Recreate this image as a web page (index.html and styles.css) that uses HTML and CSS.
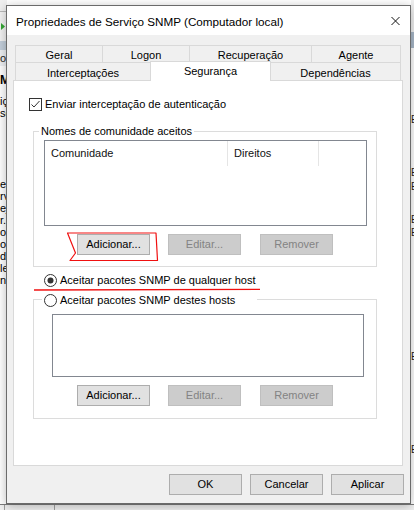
FILE: index.html
```html
<!DOCTYPE html>
<html lang="pt-BR">
<head>
<meta charset="utf-8">
<title>Propriedades de Serviço SNMP (Computador local)</title>
<link rel="stylesheet" href="styles.css">
</head>
<body>
<div class="backdrop">
  <div class="bg-cols">
    <div class="bg-left">
      <div class="bgl-menu"></div>
      <div class="bgl-toolbar"><svg class="bg-play" width="4" height="7" viewBox="0 0 4 7"><path d="M0 0 L4 3.5 L0 7 Z" fill="#35a835"/></svg></div>
      <div class="bgl-band"></div>
      <div class="bgl-colhead">o</div>
      <div class="bgl-content">
        <div class="bgl-title">M</div>
        <div class="bgl-line l-first">iç</div>
        <div class="bgl-line">se</div>
        <div class="bgl-line l-gap">e s</div>
        <div class="bgl-line">rv</div>
        <div class="bgl-line">ej</div>
        <div class="bgl-line">r.</div>
        <div class="bgl-line">o</div>
        <div class="bgl-line">ol</div>
        <div class="bgl-line">de</div>
        <div class="bgl-line">le</div>
        <div class="bgl-line">ni</div>
      </div>
    </div>
    <div class="bg-right">
      <div class="bgr-top"></div>
      <div class="bgr-band"></div>
      <div class="bgr-line r1">E</div>
      <div class="bgr-line r2">E</div>
      <div class="bgr-line r3">E</div>
      <div class="bgr-line r4">E</div>
      <div class="bgr-line r5">E</div>
      <div class="bgr-line r6">E</div>
      <div class="bgr-line r7">E</div>
    </div>
  </div>
  <div class="bg-status"><span class="bg-cell"></span></div>
</div>

<div class="dialog">
  <div class="titlebar">
    <span class="title">Propriedades de Serviço SNMP (Computador local)</span>
    <svg class="close" width="11" height="10" viewBox="0 0 11 10"><path d="M1.5 1 L9.5 9 M9.5 1 L1.5 9" stroke="#111" stroke-width="1" fill="none"/></svg>
  </div>
  <div class="dlg-body">
    <div class="tabs">
      <div class="tab-row back">
        <div class="tab w-geral">Geral</div>
        <div class="tab w-logon">Logon</div>
        <div class="tab w-recup">Recuperação</div>
        <div class="tab w-agente last">Agente</div>
      </div>
      <div class="tab-row front">
        <div class="tab w-interc">Interceptações</div>
        <div class="tab w-seg selected">Segurança</div>
        <div class="tab w-dep last">Dependências</div>
      </div>
    </div>
    <div class="panel">
      <div class="check-row">
        <svg class="checkbox" width="13" height="13" viewBox="0 0 13 13"><rect x="0.5" y="0.5" width="12" height="12" fill="#fff" stroke="#333"/><path d="M2.5 6.5 L5 9 L10.5 3" stroke="#333" stroke-width="1" fill="none"/></svg>
        <span class="label">Enviar interceptação de autenticação</span>
      </div>
      <div class="group g1">
        <div class="legend">Nomes de comunidade aceitos</div>
        <div class="listview">
          <div class="lv-header">
            <div class="col c1">Comunidade</div>
            <div class="col c2">Direitos</div>
          </div>
        </div>
        <div class="btn-row">
          <button class="btn">Adicionar...</button>
          <button class="btn" disabled>Editar...</button>
          <button class="btn" disabled>Remover</button>
        </div>
      </div>
      <div class="radio-row">
        <svg class="radio" width="13" height="13" viewBox="0 0 13 13"><circle cx="6.5" cy="6.5" r="6" fill="#fff" stroke="#333"/><circle cx="6.5" cy="6.5" r="3" fill="#333"/></svg>
        <span class="label">Aceitar pacotes SNMP de qualquer host</span>
      </div>
      <div class="group g2">
        <div class="legend radio-legend">
          <svg class="radio" width="13" height="13" viewBox="0 0 13 13"><circle cx="6.5" cy="6.5" r="6" fill="#fff" stroke="#333"/></svg>
          <span class="label">Aceitar pacotes SNMP destes hosts</span>
        </div>
        <div class="listbox"></div>
        <div class="btn-row">
          <button class="btn">Adicionar...</button>
          <button class="btn" disabled>Editar...</button>
          <button class="btn" disabled>Remover</button>
        </div>
      </div>
    </div>
    <div class="dlg-buttons">
      <button class="btn">OK</button>
      <button class="btn">Cancelar</button>
      <button class="btn">Aplicar</button>
    </div>
  </div>
</div>

<svg class="annot" width="414" height="510" viewBox="0 0 414 510">
  <path d="M67.5 233 L156 233 L157.5 260.5 L70 260.5 L75.5 253 L67.5 233 Z" fill="none" stroke="#f01010" stroke-width="1.2" stroke-linejoin="round"/>
  <path d="M34 290 L260 289.3" fill="none" stroke="#f01010" stroke-width="1.3"/>
</svg>
</body>
</html>
```

FILE: styles.css
```css
* { box-sizing: border-box; }

html, body {
  margin: 0;
  padding: 0;
}

body {
  width: 414px;
  height: 510px;
  overflow: hidden;
  position: relative;
  background: #ffffff;
  color: #000;
  font-family: "Liberation Sans", Arial, sans-serif;
  font-size: 11px;
  line-height: 13px;
}

/* ---------- background application ---------- */
.backdrop {
  height: 510px;
  display: flex;
  flex-direction: column;
}

.bg-cols {
  height: 504px;
  display: flex;
  justify-content: space-between;
}

.bg-left {
  width: 7px;
  overflow: hidden;
  white-space: nowrap;
  display: flex;
  flex-direction: column;
}

.bgl-menu {
  height: 12px;
  background: #f0f0f0;
  border-bottom: 1px solid #b9b9b9;
}

.bgl-toolbar {
  height: 29px;
  background: #f3f3f3;
  padding-top: 11px;
  padding-left: 1px;
}

.bg-play { display: block; }

.bgl-band {
  height: 9px;
  background: #c3cfdb;
}

.bgl-colhead {
  height: 16px;
  line-height: 16px;
  background: #eef0f3;
  color: #222;
  font-size: 11px;
}

.bgl-content {
  flex: 1;
  background: #fff;
  font-size: 11px;
}

.bgl-title {
  margin-top: 7px;
  height: 14px;
  line-height: 14px;
  font-weight: bold;
  font-size: 12px;
}

.bgl-line {
  height: 12px;
  line-height: 12px;
}

.l-first { margin-top: 8px; }
.l-gap { margin-top: 59px; }

.bg-right {
  width: 3px;
  overflow: hidden;
  display: flex;
  flex-direction: column;
  font-size: 10px;
}

.bgr-top {
  height: 32px;
  background: #f0f0f0;
}

.bgr-band {
  height: 16px;
  background: #a9b8c8;
}

.bgr-line {
  height: 12px;
  line-height: 12px;
  color: #222;
}

.r1 { margin-top: 66px; }
.r2 { margin-top: 41px; }
.r3 { margin-top: 2px; }
.r4 { margin-top: 21px; }
.r5 { margin-top: 1px; }
.r6 { margin-top: 112px; }
.r7 { margin-top: 81px; }

.bg-status {
  height: 6px;
  background: #f0f0f0;
  border-top: 1px solid #7c7c7c;
  padding-left: 4px;
}

.bg-cell {
  display: block;
  width: 51px;
  height: 5px;
  border-left: 1px solid #a0a0a0;
  border-right: 1px solid #a0a0a0;
}

/* ---------- dialog window ---------- */
.dialog {
  position: absolute;
  left: 6px;
  top: 5px;
  width: 405px;
  height: 499px;
  border: 1px solid #6b6b6b;
  background: #f0f0f0;
  box-shadow: 0 2px 10px rgba(0, 0, 0, 0.28);
  overflow: hidden;
}

.titlebar {
  height: 29px;
  background: #fff;
  display: flex;
  align-items: flex-start;
  padding-left: 9px;
}

.title {
  font-size: 11.7px;
  padding-top: 3px;
  line-height: 26px;
  color: #000;
  white-space: nowrap;
}

.close {
  display: block;
  margin-left: auto;
  margin-top: 10px;
  margin-right: 9px;
}

.dlg-body {
  padding: 10px 7px 0 6px;
}

/* tabs */
.tabs {
  margin-left: 2px;
}

.tab-row {
  display: flex;
  align-items: flex-start;
}

.tab {
  background: #f0f0f0;
  border-top: 1px solid #d9d9d9;
  border-left: 1px solid #d9d9d9;
  text-align: center;
  white-space: nowrap;
  color: #000;
}

.tab.last { border-right: 1px solid #d9d9d9; }

.back .tab {
  height: 17px;
  padding-top: 3px;
}

.front .tab {
  height: 18px;
  padding-top: 4px;
}

.front .tab.selected {
  position: relative;
  z-index: 1;
  margin-top: -1px;
  height: 20px;
  padding-top: 3px;
  background: #fff;
  border-right: 1px solid #d9d9d9;
}

.front .w-dep { border-left: none; }

.w-geral { width: 87px; }
.w-logon { width: 87px; }
.w-recup { width: 122px; }
.w-agente { width: 90px; }
.w-interc { width: 135px; }
.w-seg { width: 121px; }
.w-dep { width: 130px; }

/* panel */
.panel {
  margin-top: -1px;
  width: 390px;
  height: 386px;
  background: #fff;
  border: 1px solid #d9d9d9;
  padding-top: 17px;
}

.check-row,
.radio-row {
  display: flex;
  align-items: center;
  height: 13px;
}

.check-row { margin-left: 15px; }

.checkbox,
.radio {
  display: block;
  flex: none;
}

.label {
  margin-left: 3px;
  white-space: nowrap;
}

.group {
  margin-left: 19px;
  width: 344px;
  border: 1px solid #dcdcdc;
}

.g1 {
  margin-top: 20px;
  padding-bottom: 11px;
}

.legend {
  width: max-content;
  height: 13px;
  background: #fff;
  padding: 0 2px;
  white-space: nowrap;
}

.g1 .legend {
  margin: -7px 0 0 5px;
}

.listview {
  margin: 2px 9px 0 10px;
  height: 86px;
  border: 1px solid #828790;
  background: #fff;
}

.lv-header {
  display: flex;
  height: 25px;
}

.col {
  height: 25px;
  line-height: 25px;
  padding-left: 6px;
  border-right: 1px solid #e5e5e5;
  color: #111;
  white-space: nowrap;
}

.c1 { width: 183px; }
.c2 { width: 91px; }

.btn-row {
  display: flex;
  gap: 18px;
  margin: 8px 0 0 43px;
}

.btn-row .btn:last-child { margin-left: 1px; }

.btn {
  width: 73px;
  height: 21px;
  padding: 0;
  margin: 0;
  font-family: inherit;
  font-size: 11px;
  line-height: 19px;
  color: #000;
  background: #e1e1e1;
  border: 1px solid #adadad;
  border-radius: 0;
  text-align: center;
}

.btn:disabled {
  background: #cccccc;
  border-color: #bfbfbf;
  color: #838383;
}

.radio-row {
  margin: 7px 0 0 30px;
}

.g2 {
  margin-top: 12px;
  padding-bottom: 12px;
}

.radio-legend {
  display: flex;
  align-items: center;
  width: 215px;
  margin: -6px 0 0 8px;
  padding: 0 0 0 2px;
}

.listbox {
  margin: 7px 0 0 18px;
  width: 312px;
  height: 63px;
  border: 1px solid #828790;
  background: #fff;
}

.dlg-buttons {
  display: flex;
  justify-content: flex-end;
  gap: 8px;
  margin-top: 8px;
  margin-right: -1px;
}

/* annotation overlay */
.annot {
  position: absolute;
  left: 0;
  top: 0;
  pointer-events: none;
  z-index: 10;
}
```
